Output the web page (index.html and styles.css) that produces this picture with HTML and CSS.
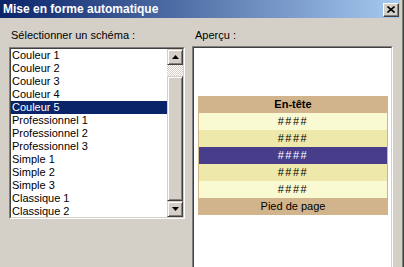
FILE: index.html
```html
<!DOCTYPE html>
<html lang="fr">
<head>
  <meta charset="UTF-8">
  <title>Mise en forme automatique</title>
  <link rel="stylesheet" href="styles.css">
</head>
<body>
  <div class="window">
    <div class="titlebar">
      <span class="title">Mise en forme automatique</span>
      <button class="close" title="Fermer">
        <svg width="8" height="7" viewBox="0 0 8 7"><path d="M0.5 0.5L7.5 6.5M7.5 0.5L0.5 6.5" stroke="#000" stroke-width="1.6" fill="none"/></svg>
      </button>
    </div>

    <div class="content">
      <div class="col col-list">
        <div class="label">Sélectionner un schéma :</div>
        <div class="listbox">
          <div class="listbox-inner">
            <ul class="items">
              <li>Couleur 1</li>
              <li>Couleur 2</li>
              <li>Couleur 3</li>
              <li>Couleur 4</li>
              <li class="selected">Couleur 5</li>
              <li>Professionnel 1</li>
              <li>Professionnel 2</li>
              <li>Professionnel 3</li>
              <li>Simple 1</li>
              <li>Simple 2</li>
              <li>Simple 3</li>
              <li>Classique 1</li>
              <li>Classique 2</li>
            </ul>
            <div class="scrollbar">
              <div class="sb-btn">
                <svg width="7" height="4" viewBox="0 0 7 4"><path d="M3.5 0L7 4H0Z" fill="#000"/></svg>
              </div>
              <div class="sb-track"></div>
              <div class="sb-thumb"></div>
              <div class="sb-btn">
                <svg width="7" height="4" viewBox="0 0 7 4"><path d="M0 0H7L3.5 4Z" fill="#000"/></svg>
              </div>
            </div>
          </div>
        </div>
      </div>

      <div class="col col-preview">
        <div class="label label-preview">Aperçu :</div>
        <div class="preview">
          <div class="preview-inner">
            <table class="sample">
              <tr class="head"><td>En-tête</td></tr>
              <tr class="light"><td class="hash">####</td></tr>
              <tr class="gold"><td class="hash">####</td></tr>
              <tr class="accent"><td class="hash">####</td></tr>
              <tr class="gold"><td class="hash">####</td></tr>
              <tr class="light"><td class="hash">####</td></tr>
              <tr class="foot"><td>Pied de page</td></tr>
            </table>
          </div>
        </div>
      </div>
    </div>
  </div>
</body>
</html>
```

FILE: styles.css
```css
body {
  margin: 0;
  background: #d4d0c8;
  font-family: "Liberation Sans", Arial, sans-serif;
  font-size: 11px;
  color: #000;
  overflow: hidden;
}
.window {
  width: 404px;
  height: 267px;
  box-sizing: border-box;
  box-shadow: inset -1px 0 #404040, inset -2px 0 #808080;
  overflow: hidden;
}
.titlebar {
  width: 400px;
  height: 18px;
  box-sizing: border-box;
  padding: 0 1px 0 3px;
  display: flex;
  align-items: center;
  justify-content: space-between;
  background: linear-gradient(to right, #0a246a, #a6caf0);
}
.title {
  color: white;
  font-weight: bold;
  font-size: 12px;
}
.close {
  width: 16px;
  height: 14px;
  padding: 0;
  margin-top: 1px;
  display: flex;
  align-items: center;
  justify-content: center;
  background: #d4d0c8;
  border: 1px solid;
  border-color: #fff #404040 #404040 #fff;
  box-shadow: inset -1px -1px #808080;
}

.content {
  display: flex;
  gap: 7px;
  padding: 11px 0 0 9px;
}
.label {
  height: 13px;
  line-height: 13px;
  padding-left: 2px;
  white-space: nowrap;
}
.label-preview {
  padding-left: 3px;
}

/* liste des schémas */
.listbox {
  width: 176px;
  height: 172px;
  margin-top: 5px;
  box-sizing: border-box;
  border: 1px solid;
  border-color: #808080 #fff #fff #808080;
}
.listbox-inner {
  height: 100%;
  box-sizing: border-box;
  border: 1px solid;
  border-color: #404040 #d4d0c8 #d4d0c8 #404040;
  background: white;
  display: flex;
}
.items {
  flex: 1;
  list-style: none;
  margin: 0;
  padding: 0;
  overflow: hidden;
}
.items li {
  height: 13px;
  line-height: 13px;
  padding-left: 1px;
  white-space: nowrap;
}
.items li.selected {
  background: #0a246a;
  color: white;
}
.scrollbar {
  width: 16px;
  display: flex;
  flex-direction: column;
}
.sb-btn, .sb-thumb {
  box-sizing: border-box;
  background: #d4d0c8;
  border: 1px solid;
  border-color: #d4d0c8 #404040 #404040 #d4d0c8;
  box-shadow: inset 1px 1px #fff, inset -1px -1px #808080;
}
.sb-btn {
  height: 16px;
  display: flex;
  align-items: center;
  justify-content: center;
}
.sb-track {
  height: 11px;
  background-color: #fff;
  background-image: repeating-conic-gradient(#d4d0c8 0 25%, #fff 0 50%);
  background-size: 2px 2px;
}
.sb-thumb {
  flex: 1;
}

/* aperçu */
.preview {
  width: 201px;
  height: 240px;
  margin-top: 4px;
  box-sizing: border-box;
  border: 1px solid;
  border-color: #808080 #fff #fff #808080;
}
.preview-inner {
  height: 100%;
  box-sizing: border-box;
  border: 1px solid;
  border-color: #404040 #d4d0c8 #d4d0c8 #404040;
  background: white;
  padding: 48px 0 0 4px;
}
.sample {
  width: 190px;
  border-collapse: collapse;
  border-left: 1px solid #d2b48c;
  border-right: 1px solid #d2b48c;
}
.sample td {
  height: 17px;
  padding: 0;
  text-align: center;
  line-height: 17px;
}
.sample .hash {
  letter-spacing: 1.5px;
}
.head td {
  background: #d2b48c;
  font-weight: bold;
}
.light td {
  background: #fafad2;
}
.gold td {
  background: #eee8aa;
}
.accent td {
  background: #483d8b;
  color: white;
}
.foot td {
  background: #d2b48c;
}
```
